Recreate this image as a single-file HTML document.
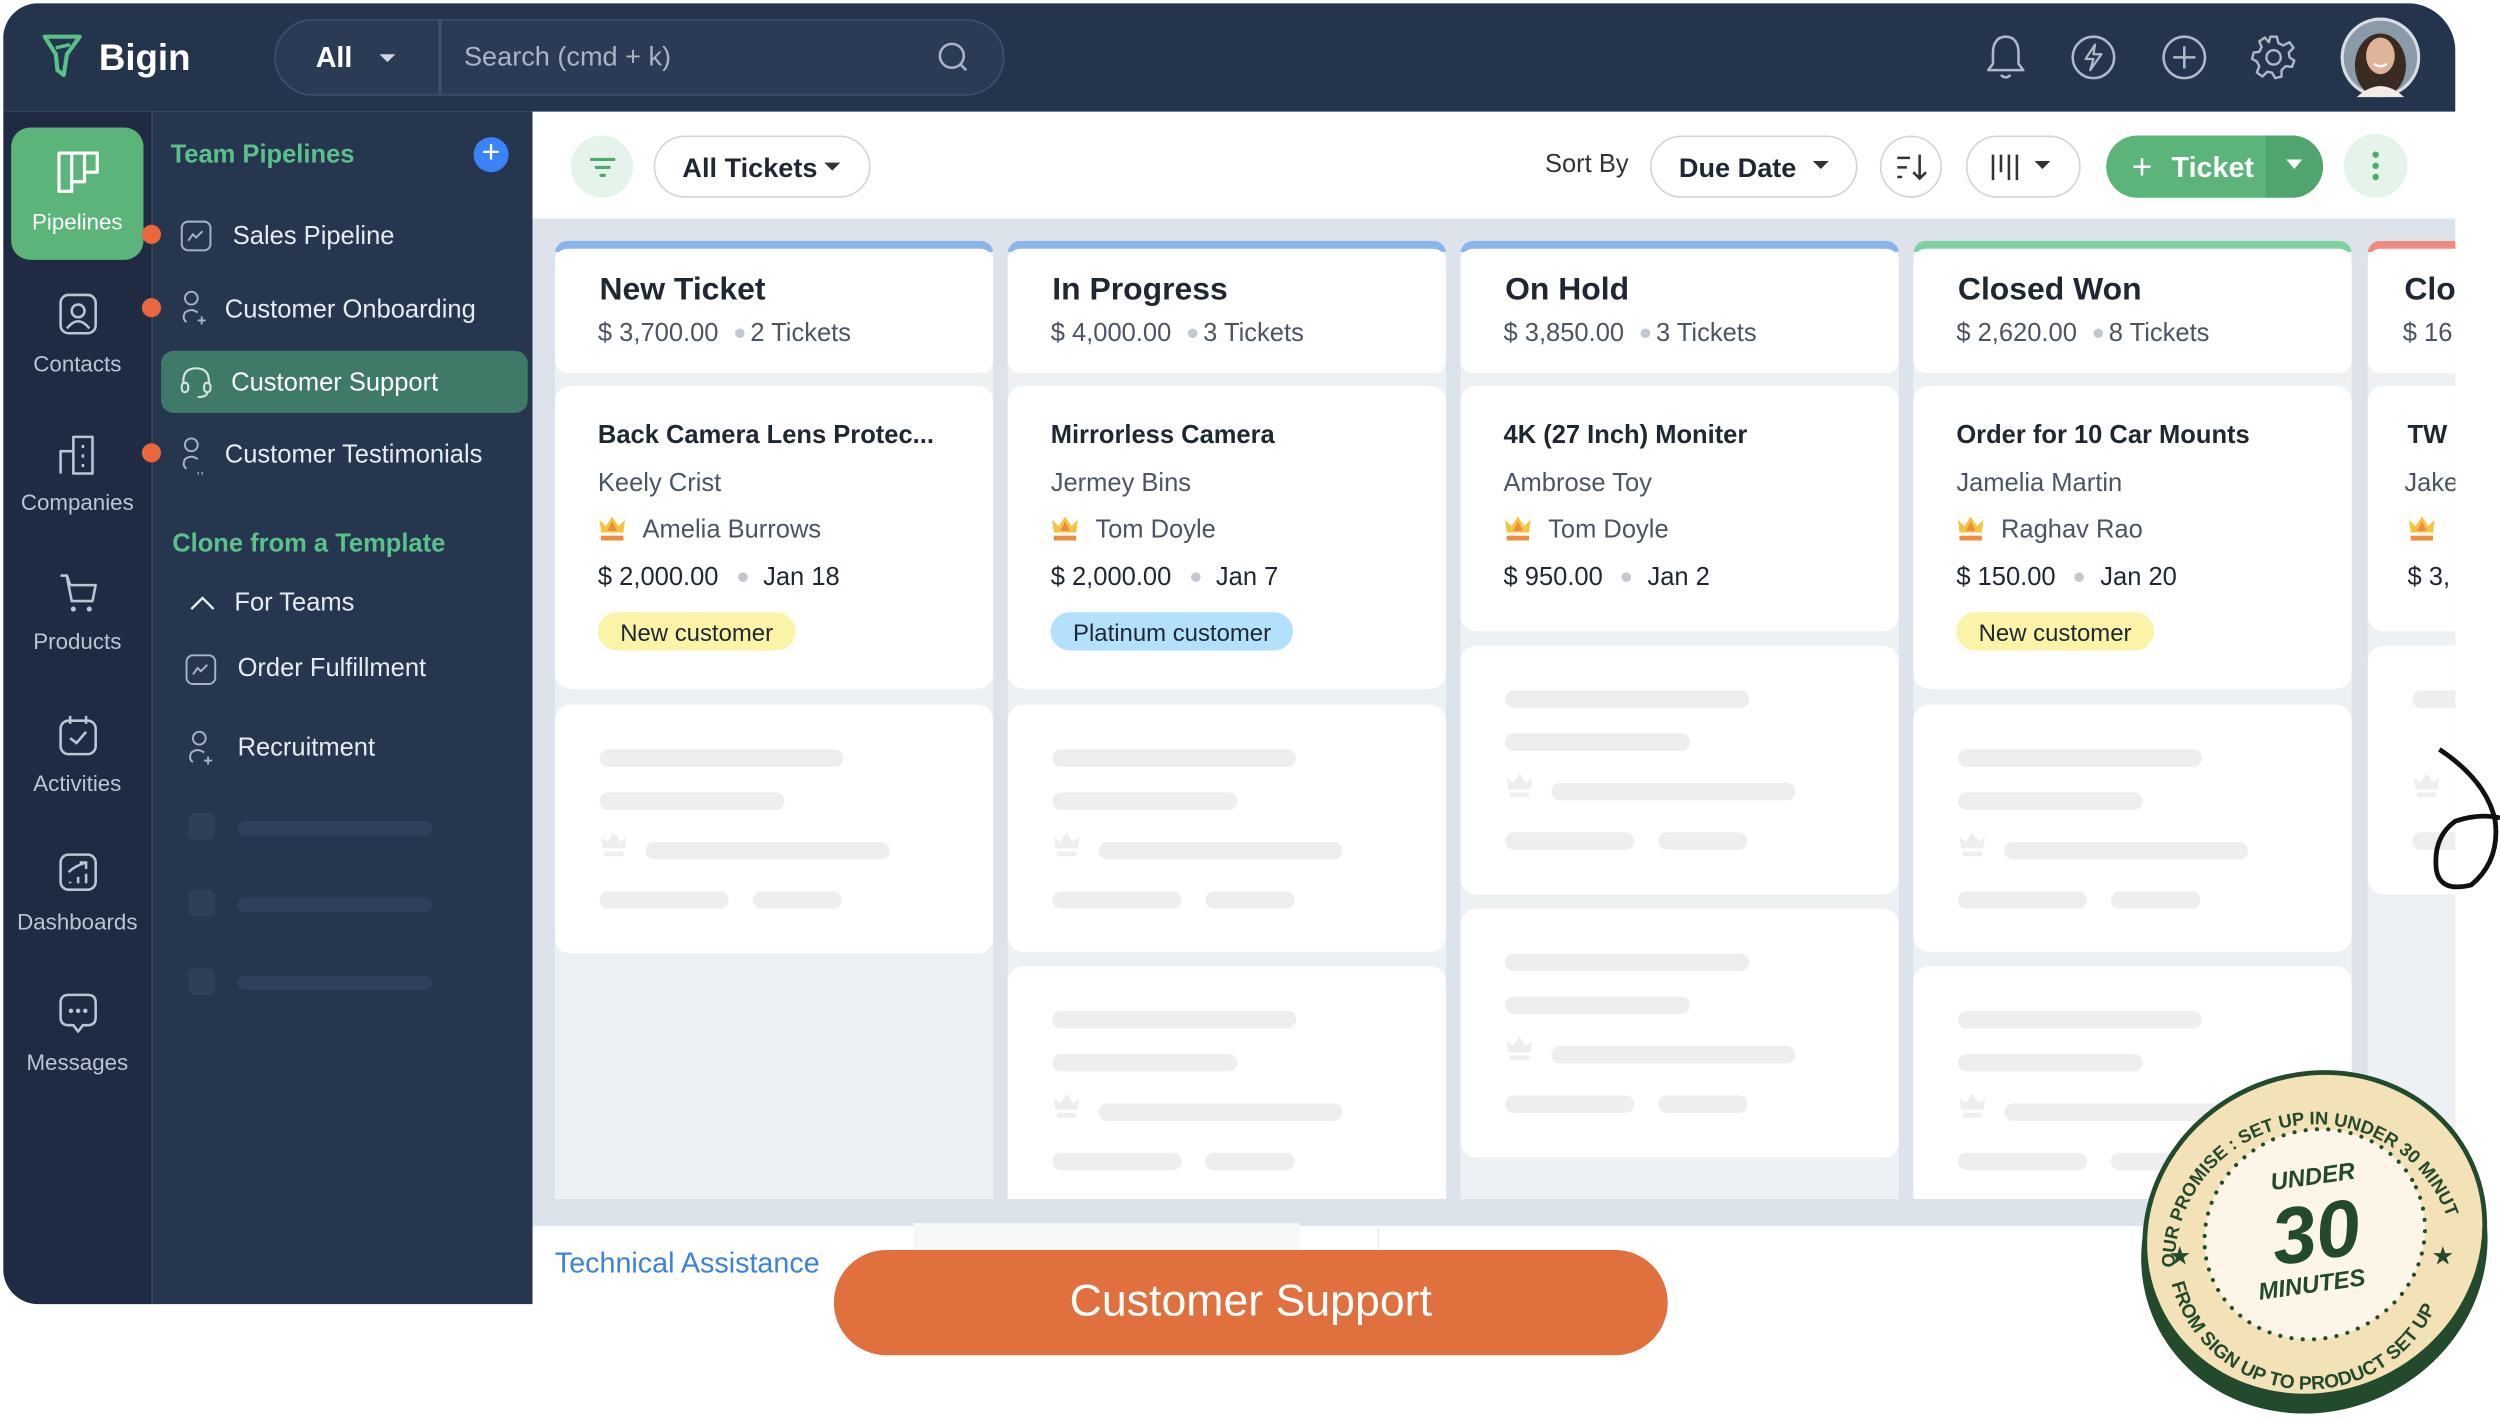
<!DOCTYPE html>
<html><head><meta charset="utf-8">
<style>
*{box-sizing:border-box;margin:0;padding:0}
html,body{width:2500px;height:1419px;overflow:hidden;background:#fff}
#s{position:absolute;left:0;top:0;width:1568px;height:890px;transform:scale(1.59439);transform-origin:0 0;font-family:"Liberation Sans",sans-serif}
.a{position:absolute}
.t{position:absolute;white-space:nowrap;line-height:1}
.col{position:absolute;top:151px;width:275px;height:601px;background:#eef1f4;border-radius:8px 8px 0 0;overflow:hidden}
.strip{position:absolute;left:0;top:0;right:0;height:7px}
.hd{position:absolute;left:0;top:5px;right:0;height:78px;background:#fff;border-radius:8px}
.card{position:absolute;left:0;right:0;background:#fff;border-radius:10px}
.bar{position:absolute;height:11px;border-radius:6px;background:#eeeeee}
.ti{font-size:20px;font-weight:bold;color:#1f2733;left:28px;top:21px}
.sub{font-size:16px;color:#4b5563;left:27px;top:51px}
.dot{display:inline-block;width:6px;height:6px;border-radius:3px;background:#c3c8cf;margin:0 4px 2px 10px;vertical-align:middle}
.ct{font-size:16px;font-weight:bold;color:#1f2733;left:27px}
.cn{font-size:16px;color:#4b5563;left:27px}
.tag{position:absolute;left:27px;height:24px;border-radius:12px;font-size:15px;color:#1f2733;padding:5px 14px 0}
.nav{position:absolute;left:2px;width:93px;text-align:center;font-size:14px;color:#bcc5d3}
.pi{position:absolute;font-size:16px;color:#e6ebf2;white-space:nowrap;line-height:1}
.od{position:absolute;left:89px;width:12px;height:12px;border-radius:6px;background:#e8673c}
</style></head><body><div id="s">

<div class="a" style="left:2px;top:2px;width:1538px;height:816px;background:#fff;border-radius:22px 30px 0 22px;overflow:hidden">
  <div class="a" style="left:0;top:0;width:1538px;height:68px;background:#24344d"></div>
  <div class="a" style="left:0;top:68px;width:93px;height:748px;background:#1e2b42"></div>
  <div class="a" style="left:93px;top:68px;width:239px;height:748px;background:#26364f;border-left:1px solid #34445c"></div>
  <div class="a" style="left:332px;top:135px;width:1206px;height:632px;background:#dce3ea"></div>
</div>

<svg class="a" style="left:25px;top:20px" width="28" height="30" viewBox="0 0 28 30"><path d="M3 3 L25 3 L17 14 L15 27 L11 24 L10 14 Z" fill="none" stroke="#5bc08a" stroke-width="2.6" stroke-linejoin="round"/><path d="M10 10 L19 8" stroke="#5bc08a" stroke-width="2.2"/></svg>
<div class="t" style="left:62px;top:25px;font-size:23px;font-weight:bold;color:#fff">Bigin</div>

<div class="a" style="left:172px;top:12px;width:458px;height:48px;border:1.5px solid #3e5070;border-radius:24px;background:#2b3b55"></div>
<div class="a" style="left:275px;top:13px;width:1.5px;height:46px;background:#3e5070"></div>
<div class="t" style="left:198px;top:27px;font-size:18px;font-weight:bold;color:#fff">All</div>
<div class="a" style="left:238px;top:34px;border:5px solid transparent;border-top:5px solid #cfd6e0"></div>
<div class="t" style="left:291px;top:27px;font-size:17px;color:#aab4c4">Search (cmd + k)</div>
<svg class="a" style="left:587px;top:25px" width="22" height="22" viewBox="0 0 22 22"><circle cx="10" cy="10" r="7.5" fill="none" stroke="#aab4c4" stroke-width="1.6"/><path d="M15.5 15.5 L19 19" stroke="#aab4c4" stroke-width="1.6"/></svg>

<svg class="a" style="left:1244px;top:20px" width="28" height="32" viewBox="0 0 28 32"><path d="M14 3 C8 3 6 8 6 13 L6 20 L3 24 L25 24 L22 20 L22 13 C22 8 20 3 14 3 Z" fill="none" stroke="#aeb8c8" stroke-width="1.6" stroke-linejoin="round"/><path d="M11 27 Q14 30 17 27" fill="none" stroke="#aeb8c8" stroke-width="1.6"/></svg>
<svg class="a" style="left:1298px;top:21px" width="30" height="30" viewBox="0 0 30 30"><circle cx="15" cy="15" r="13" fill="none" stroke="#aeb8c8" stroke-width="1.6"/><path d="M16 7 L10 16 L15 16 L13 23 L20 13 L15 13 Z" fill="none" stroke="#aeb8c8" stroke-width="1.4" stroke-linejoin="round"/></svg>
<svg class="a" style="left:1355px;top:21px" width="30" height="30" viewBox="0 0 30 30"><circle cx="15" cy="15" r="13" fill="none" stroke="#aeb8c8" stroke-width="1.6"/><path d="M15 8 V22 M8 15 H22" stroke="#aeb8c8" stroke-width="1.6"/></svg>
<svg class="a" style="left:1411px;top:21px" width="30" height="30" viewBox="0 0 30 30"><path d="M13 2 H17 L18 6 L21 7.5 L25 5.5 L27.5 9 L24.5 12 L25 15 L28 17 L26.5 21 L22.5 20.5 L20 23 L20 27 L16 28 L14 24.5 L11 24 L8 27 L4.5 24.5 L6 20.5 L4.5 17.5 L1.5 16 L2.5 12 L6 11.5 L7.5 8.5 L6 5 L9.5 2.5 L12 5.5 Z" fill="none" stroke="#aeb8c8" stroke-width="1.5" stroke-linejoin="round"/><circle cx="15" cy="15" r="4.5" fill="none" stroke="#aeb8c8" stroke-width="1.5"/></svg>
<svg class="a" style="left:1468px;top:11px" width="50" height="50" viewBox="0 0 50 50"><circle cx="25" cy="25" r="24" fill="#8a9aa8" stroke="#d8dde3" stroke-width="2"/><ellipse cx="25" cy="30" rx="16" ry="20" fill="#3a2a22"/><ellipse cx="25" cy="24" rx="9" ry="11.5" fill="#e0b49a"/><path d="M10 50 Q25 36 40 50 Z" fill="#f2ece6"/><path d="M21 29 Q25 32 29 29" stroke="#fff" stroke-width="1.5" fill="none"/></svg>

<div class="a" style="left:7px;top:80px;width:83px;height:83px;background:#5bb57a;border-radius:12px"></div>
<svg class="a" style="left:35px;top:94px" width="28" height="28" viewBox="0 0 28 28"><path d="M2 2 H26 V14 H18 V20 H10 V26 H2 Z M10 2 V26 M18 2 V14" fill="none" stroke="#fff" stroke-width="2" stroke-linejoin="round"/></svg>
<div class="nav" style="top:131px;color:#fff">Pipelines</div>

<svg class="a" style="left:35px;top:183px" width="28" height="28" viewBox="0 0 28 28"><rect x="3" y="2" width="22" height="24" rx="5" fill="none" stroke="#bcc5d3" stroke-width="1.6"/><circle cx="14" cy="12" r="4" fill="none" stroke="#bcc5d3" stroke-width="1.6"/><path d="M7 23 Q14 14 21 23" fill="none" stroke="#bcc5d3" stroke-width="1.6"/></svg>
<div class="nav" style="top:220px">Contacts</div>
<svg class="a" style="left:35px;top:271px" width="28" height="28" viewBox="0 0 28 28"><path d="M3 26 V12 H11 V26 M11 26 V3 H23 V26 Z" fill="none" stroke="#bcc5d3" stroke-width="1.6" stroke-linejoin="round"/><path d="M17 8 V10 M17 14 V16 M17 20 V22" stroke="#bcc5d3" stroke-width="1.6"/></svg>
<div class="nav" style="top:307px">Companies</div>
<svg class="a" style="left:35px;top:358px" width="28" height="28" viewBox="0 0 28 28"><path d="M3 3 H7 L9 9 H25 L23 19 H10 L7 4" fill="none" stroke="#bcc5d3" stroke-width="1.6" stroke-linejoin="round"/><circle cx="11" cy="24" r="1.6" fill="#bcc5d3"/><circle cx="21" cy="24" r="1.6" fill="#bcc5d3"/></svg>
<div class="nav" style="top:394px">Products</div>
<svg class="a" style="left:35px;top:447px" width="28" height="28" viewBox="0 0 28 28"><rect x="3" y="5" width="22" height="21" rx="5" fill="none" stroke="#bcc5d3" stroke-width="1.6"/><path d="M9 2 V7 M19 2 V7 M9 16 L13 19 L19 12" fill="none" stroke="#bcc5d3" stroke-width="1.6"/></svg>
<div class="nav" style="top:483px">Activities</div>
<svg class="a" style="left:35px;top:533px" width="28" height="28" viewBox="0 0 28 28"><rect x="3" y="3" width="22" height="22" rx="5" fill="none" stroke="#bcc5d3" stroke-width="1.6"/><path d="M8 14 Q12 10 19 8 M15 8 H19 V12 M9 20 V21 M14 17 V21 M19 15 V21" fill="none" stroke="#bcc5d3" stroke-width="1.6"/></svg>
<div class="nav" style="top:570px">Dashboards</div>
<svg class="a" style="left:35px;top:621px" width="28" height="30" viewBox="0 0 28 30"><path d="M8 3 H20 Q25 3 25 8 V17 Q25 22 20 22 H17 L14 26 L11 22 H8 Q3 22 3 17 V8 Q3 3 8 3 Z" fill="none" stroke="#bcc5d3" stroke-width="1.6" stroke-linejoin="round"/><circle cx="9.5" cy="13" r="1.4" fill="#bcc5d3"/><circle cx="14" cy="13" r="1.4" fill="#bcc5d3"/><circle cx="18.5" cy="13" r="1.4" fill="#bcc5d3"/></svg>
<div class="nav" style="top:658px">Messages</div>

<div class="t" style="left:107px;top:90px;font-size:16px;font-weight:bold;color:#5cc08c">Team Pipelines</div>
<div class="a" style="left:297px;top:86px;width:22px;height:22px;border-radius:11px;background:#3b82f6;color:#fff;font-size:20px;line-height:21px;text-align:center">+</div>

<div class="od" style="top:141px"></div>
<svg class="a" style="left:113px;top:138px" width="20" height="20" viewBox="0 0 20 20"><rect x="1" y="1" width="18" height="18" rx="4" fill="none" stroke="#a9b4c4" stroke-width="1.2"/><path d="M5 13 L8 9 L10 11 L14 7" fill="none" stroke="#a9b4c4" stroke-width="1.2"/></svg>
<div class="pi" style="left:146px;top:141px">Sales Pipeline</div>

<div class="od" style="top:187px"></div>
<svg class="a" style="left:112px;top:182px" width="20" height="24" viewBox="0 0 20 24"><circle cx="8" cy="5" r="4" fill="none" stroke="#a9b4c4" stroke-width="1.2"/><path d="M12 14 Q8 11 4 14 Q2 18 5 20 M12 19 H17 M14.5 16.5 V21.5" fill="none" stroke="#a9b4c4" stroke-width="1.2"/></svg>
<div class="pi" style="left:141px;top:187px">Customer Onboarding</div>

<div class="a" style="left:101px;top:220px;width:230px;height:39px;border-radius:8px;background:#3e7a67"></div>
<svg class="a" style="left:112px;top:229px" width="22" height="22" viewBox="0 0 22 22"><path d="M3 12 V10 Q3 2 11 2 Q19 2 19 10 V12" fill="none" stroke="#d6e4de" stroke-width="1.3"/><rect x="2" y="11" width="4" height="6" rx="2" fill="none" stroke="#d6e4de" stroke-width="1.3"/><rect x="16" y="11" width="4" height="6" rx="2" fill="none" stroke="#d6e4de" stroke-width="1.3"/><path d="M18 17 Q18 20 12 20" fill="none" stroke="#d6e4de" stroke-width="1.3"/></svg>
<div class="pi" style="left:145px;top:233px;color:#fff">Customer Support</div>

<div class="od" style="top:278px"></div>
<svg class="a" style="left:112px;top:274px" width="20" height="24" viewBox="0 0 20 24"><circle cx="8" cy="5" r="4" fill="none" stroke="#a9b4c4" stroke-width="1.2"/><path d="M12 14 Q8 11 4 14 Q2 18 5 20" fill="none" stroke="#a9b4c4" stroke-width="1.2"/><text x="11" y="23" font-size="9" fill="#a9b4c4" font-family="Liberation Sans">,,</text></svg>
<div class="pi" style="left:141px;top:278px">Customer Testimonials</div>

<div class="t" style="left:108px;top:334px;font-size:16px;font-weight:bold;color:#5cc08c">Clone from a Template</div>
<svg class="a" style="left:118px;top:372px" width="18" height="12" viewBox="0 0 18 12"><path d="M2 10 L9 3 L16 10" fill="none" stroke="#e6ebf2" stroke-width="1.5"/></svg>
<div class="pi" style="left:147px;top:371px">For Teams</div>
<svg class="a" style="left:116px;top:410px" width="20" height="20" viewBox="0 0 20 20"><rect x="1" y="1" width="18" height="18" rx="4" fill="none" stroke="#a9b4c4" stroke-width="1.2"/><path d="M5 13 L8 9 L10 11 L14 7" fill="none" stroke="#a9b4c4" stroke-width="1.2"/></svg>
<div class="pi" style="left:149px;top:412px">Order Fulfillment</div>
<svg class="a" style="left:116px;top:457px" width="20" height="26" viewBox="0 0 20 26"><circle cx="9" cy="6" r="4" fill="none" stroke="#a9b4c4" stroke-width="1.2"/><path d="M12 15 Q8 12 4 15 Q2 19 5 21 M12 20 H17 M14.5 17.5 V22.5" fill="none" stroke="#a9b4c4" stroke-width="1.2"/></svg>
<div class="pi" style="left:149px;top:462px">Recruitment</div>

<div class="a" style="left:118px;top:510px;width:17px;height:17px;border-radius:4px;background:#2f3f58"></div>
<div class="a" style="left:149px;top:515px;width:122px;height:9px;border-radius:5px;background:#30405a"></div>
<div class="a" style="left:118px;top:558px;width:17px;height:17px;border-radius:4px;background:#2f3f58"></div>
<div class="a" style="left:149px;top:563px;width:122px;height:9px;border-radius:5px;background:#30405a"></div>
<div class="a" style="left:118px;top:607px;width:17px;height:17px;border-radius:4px;background:#2f3f58"></div>
<div class="a" style="left:149px;top:612px;width:122px;height:9px;border-radius:5px;background:#30405a"></div>

<div class="a" style="left:358px;top:85px;width:39px;height:39px;border-radius:20px;background:#e5f3ea"></div>
<svg class="a" style="left:368px;top:95px" width="20" height="20" viewBox="0 0 20 20"><path d="M3 5 H17 M6 10 H14 M9 15 H11" stroke="#4caa6e" stroke-width="2" stroke-linecap="round"/></svg>
<div class="a" style="left:410px;top:85px;width:136px;height:39px;border:1.5px solid #cfd5dd;border-radius:20px"></div>
<div class="t" style="left:428px;top:97px;font-size:17px;font-weight:bold;color:#1f2733">All Tickets</div>
<div class="a" style="left:517px;top:102px;border:5px solid transparent;border-top:5px solid #333"></div>
<div class="t" style="left:969px;top:96px;font-size:16px;color:#333">Sort By</div>
<div class="a" style="left:1035px;top:85px;width:130px;height:39px;border:1.5px solid #cfd5dd;border-radius:20px"></div>
<div class="t" style="left:1053px;top:97px;font-size:17px;font-weight:bold;color:#1f2733">Due Date</div>
<div class="a" style="left:1137px;top:101px;border:5px solid transparent;border-top:5px solid #333"></div>
<div class="a" style="left:1179px;top:85px;width:39px;height:39px;border:1.5px solid #cfd5dd;border-radius:20px"></div>
<svg class="a" style="left:1187px;top:94px" width="24" height="22" viewBox="0 0 24 22"><path d="M3 5 H11 M3 11 H9 M3 17 H6 M17 3 V18 M13 14 L17 18 L21 14" fill="none" stroke="#333" stroke-width="1.6"/></svg>
<div class="a" style="left:1233px;top:85px;width:72px;height:39px;border:1.5px solid #cfd5dd;border-radius:20px"></div>
<svg class="a" style="left:1247px;top:94px" width="22" height="22" viewBox="0 0 22 22"><path d="M3 3 V19 M8 3 V14 M13 3 V19 M18 3 V19" stroke="#333" stroke-width="1.6"/></svg>
<div class="a" style="left:1276px;top:101px;border:5px solid transparent;border-top:5px solid #333"></div>
<div class="a" style="left:1321px;top:85px;width:136px;height:39px;border-radius:20px;background:#5bb57a;overflow:hidden"><div class="a" style="left:100px;top:0;width:36px;height:39px;background:#50a56e"></div></div>
<div class="t" style="left:1337px;top:94px;font-size:22px;color:#fff">+</div>
<div class="t" style="left:1362px;top:96px;font-size:18px;font-weight:bold;color:#fff">Ticket</div>
<div class="a" style="left:1434px;top:100px;border:5px solid transparent;border-top:6px solid #fff"></div>
<div class="a" style="left:1470px;top:84px;width:40px;height:40px;border-radius:20px;background:#e5f3ea"></div>
<div class="a" style="left:1488px;top:95px;width:4px;height:4px;border-radius:2px;background:#4caa6e;box-shadow:0 7px 0 #4caa6e,0 14px 0 #4caa6e"></div>

<div class="col" style="left:348px">
  <div class="strip" style="background:#8ab4ec"></div><div class="hd"></div>
  <div class="t ti">New Ticket</div>
  <div class="t sub">$ 3,700.00<span class="dot"></span>2 Tickets</div>
  <div class="card" style="top:91px;height:190px">
    <div class="t ct" style="top:24px">Back Camera Lens Protec...</div>
    <div class="t cn" style="top:54px">Keely Crist</div>
    <svg class="a" style="left:27px;top:81px" width="18" height="17" viewBox="0 0 18 17"><path d="M1 3 L5 7 L9 1 L13 7 L17 3 L16 11 H2 Z" fill="#f5c342"/><path d="M9 4 L12 10 H6 Z" fill="#ef8b3a"/><rect x="2" y="13" width="14" height="3" fill="#ef8b3a"/></svg>
    <div class="t cn" style="left:55px;top:83px">Amelia Burrows</div>
    <div class="t cn" style="top:113px;color:#1f2733">$ 2,000.00<span class="dot" style="margin:0 10px 2px 12px"></span>Jan 18</div>
    <div class="tag" style="top:142px;background:#fbf3a8">New customer</div>
  </div>
  <div class="card" style="top:291px;height:156px">
    <div class="bar" style="left:28px;top:28px;width:153px"></div><div class="bar" style="left:28px;top:55px;width:116px"></div>
    <svg class="a" style="left:28px;top:80px" width="18" height="16" viewBox="0 0 18 16"><path d="M1 3 L5 6 L9 0 L13 6 L17 3 L16 10 H2 Z" fill="#eee"/><rect x="3" y="12" width="12" height="3" fill="#eee"/></svg>
    <div class="bar" style="left:57px;top:86px;width:153px"></div>
    <div class="bar" style="left:28px;top:117px;width:81px"></div><div class="bar" style="left:124px;top:117px;width:56px"></div>
  </div>
</div>

<div class="col" style="left:632px">
  <div class="strip" style="background:#8ab4ec"></div><div class="hd"></div>
  <div class="t ti">In Progress</div>
  <div class="t sub">$ 4,000.00<span class="dot"></span>3 Tickets</div>
  <div class="card" style="top:91px;height:190px">
    <div class="t ct" style="top:24px">Mirrorless Camera</div>
    <div class="t cn" style="top:54px">Jermey Bins</div>
    <svg class="a" style="left:27px;top:81px" width="18" height="17" viewBox="0 0 18 17"><path d="M1 3 L5 7 L9 1 L13 7 L17 3 L16 11 H2 Z" fill="#f5c342"/><path d="M9 4 L12 10 H6 Z" fill="#ef8b3a"/><rect x="2" y="13" width="14" height="3" fill="#ef8b3a"/></svg>
    <div class="t cn" style="left:55px;top:83px">Tom Doyle</div>
    <div class="t cn" style="top:113px;color:#1f2733">$ 2,000.00<span class="dot" style="margin:0 10px 2px 12px"></span>Jan 7</div>
    <div class="tag" style="top:142px;background:#b3e0fb">Platinum customer</div>
  </div>
  <div class="card" style="top:291px;height:155px">
    <div class="bar" style="left:28px;top:28px;width:153px"></div><div class="bar" style="left:28px;top:55px;width:116px"></div>
    <svg class="a" style="left:28px;top:80px" width="18" height="16" viewBox="0 0 18 16"><path d="M1 3 L5 6 L9 0 L13 6 L17 3 L16 10 H2 Z" fill="#eee"/><rect x="3" y="12" width="12" height="3" fill="#eee"/></svg>
    <div class="bar" style="left:57px;top:86px;width:153px"></div>
    <div class="bar" style="left:28px;top:117px;width:81px"></div><div class="bar" style="left:124px;top:117px;width:56px"></div>
  </div>
  <div class="card" style="top:455px;height:160px">
    <div class="bar" style="left:28px;top:28px;width:153px"></div><div class="bar" style="left:28px;top:55px;width:116px"></div>
    <svg class="a" style="left:28px;top:80px" width="18" height="16" viewBox="0 0 18 16"><path d="M1 3 L5 6 L9 0 L13 6 L17 3 L16 10 H2 Z" fill="#eee"/><rect x="3" y="12" width="12" height="3" fill="#eee"/></svg>
    <div class="bar" style="left:57px;top:86px;width:153px"></div>
    <div class="bar" style="left:28px;top:117px;width:81px"></div><div class="bar" style="left:124px;top:117px;width:56px"></div>
  </div>
</div>

<div class="col" style="left:916px">
  <div class="strip" style="background:#8ab4ec"></div><div class="hd"></div>
  <div class="t ti">On Hold</div>
  <div class="t sub">$ 3,850.00<span class="dot"></span>3 Tickets</div>
  <div class="card" style="top:91px;height:154px">
    <div class="t ct" style="top:24px">4K (27 Inch) Moniter</div>
    <div class="t cn" style="top:54px">Ambrose Toy</div>
    <svg class="a" style="left:27px;top:81px" width="18" height="17" viewBox="0 0 18 17"><path d="M1 3 L5 7 L9 1 L13 7 L17 3 L16 11 H2 Z" fill="#f5c342"/><path d="M9 4 L12 10 H6 Z" fill="#ef8b3a"/><rect x="2" y="13" width="14" height="3" fill="#ef8b3a"/></svg>
    <div class="t cn" style="left:55px;top:83px">Tom Doyle</div>
    <div class="t cn" style="top:113px;color:#1f2733">$ 950.00<span class="dot" style="margin:0 10px 2px 12px"></span>Jan 2</div>
  </div>
  <div class="card" style="top:254px;height:156px">
    <div class="bar" style="left:28px;top:28px;width:153px"></div><div class="bar" style="left:28px;top:55px;width:116px"></div>
    <svg class="a" style="left:28px;top:80px" width="18" height="16" viewBox="0 0 18 16"><path d="M1 3 L5 6 L9 0 L13 6 L17 3 L16 10 H2 Z" fill="#eee"/><rect x="3" y="12" width="12" height="3" fill="#eee"/></svg>
    <div class="bar" style="left:57px;top:86px;width:153px"></div>
    <div class="bar" style="left:28px;top:117px;width:81px"></div><div class="bar" style="left:124px;top:117px;width:56px"></div>
  </div>
  <div class="card" style="top:419px;height:156px">
    <div class="bar" style="left:28px;top:28px;width:153px"></div><div class="bar" style="left:28px;top:55px;width:116px"></div>
    <svg class="a" style="left:28px;top:80px" width="18" height="16" viewBox="0 0 18 16"><path d="M1 3 L5 6 L9 0 L13 6 L17 3 L16 10 H2 Z" fill="#eee"/><rect x="3" y="12" width="12" height="3" fill="#eee"/></svg>
    <div class="bar" style="left:57px;top:86px;width:153px"></div>
    <div class="bar" style="left:28px;top:117px;width:81px"></div><div class="bar" style="left:124px;top:117px;width:56px"></div>
  </div>
</div>

<div class="col" style="left:1200px">
  <div class="strip" style="background:#7dd3a0"></div><div class="hd"></div>
  <div class="t ti">Closed Won</div>
  <div class="t sub">$ 2,620.00<span class="dot"></span>8 Tickets</div>
  <div class="card" style="top:91px;height:190px">
    <div class="t ct" style="top:24px">Order for 10 Car Mounts</div>
    <div class="t cn" style="top:54px">Jamelia Martin</div>
    <svg class="a" style="left:27px;top:81px" width="18" height="17" viewBox="0 0 18 17"><path d="M1 3 L5 7 L9 1 L13 7 L17 3 L16 11 H2 Z" fill="#f5c342"/><path d="M9 4 L12 10 H6 Z" fill="#ef8b3a"/><rect x="2" y="13" width="14" height="3" fill="#ef8b3a"/></svg>
    <div class="t cn" style="left:55px;top:83px">Raghav Rao</div>
    <div class="t cn" style="top:113px;color:#1f2733">$ 150.00<span class="dot" style="margin:0 10px 2px 12px"></span>Jan 20</div>
    <div class="tag" style="top:142px;background:#fbf3a8">New customer</div>
  </div>
  <div class="card" style="top:291px;height:155px">
    <div class="bar" style="left:28px;top:28px;width:153px"></div><div class="bar" style="left:28px;top:55px;width:116px"></div>
    <svg class="a" style="left:28px;top:80px" width="18" height="16" viewBox="0 0 18 16"><path d="M1 3 L5 6 L9 0 L13 6 L17 3 L16 10 H2 Z" fill="#eee"/><rect x="3" y="12" width="12" height="3" fill="#eee"/></svg>
    <div class="bar" style="left:57px;top:86px;width:153px"></div>
    <div class="bar" style="left:28px;top:117px;width:81px"></div><div class="bar" style="left:124px;top:117px;width:56px"></div>
  </div>
  <div class="card" style="top:455px;height:160px">
    <div class="bar" style="left:28px;top:28px;width:153px"></div><div class="bar" style="left:28px;top:55px;width:116px"></div>
    <svg class="a" style="left:28px;top:80px" width="18" height="16" viewBox="0 0 18 16"><path d="M1 3 L5 6 L9 0 L13 6 L17 3 L16 10 H2 Z" fill="#eee"/><rect x="3" y="12" width="12" height="3" fill="#eee"/></svg>
    <div class="bar" style="left:57px;top:86px;width:153px"></div>
    <div class="bar" style="left:28px;top:117px;width:81px"></div><div class="bar" style="left:124px;top:117px;width:56px"></div>
  </div>
</div>

<div class="a" style="left:1485px;top:151px;width:55px;height:601px;overflow:hidden">
<div class="col" style="left:0;top:0">
  <div class="strip" style="background:#f08a80"></div><div class="hd"></div>
  <div class="t ti" style="left:23px">Closed Lost</div>
  <div class="t sub" style="left:22px">$ 16</div>
  <div class="card" style="top:91px;height:154px">
    <div class="t ct" style="top:24px;left:25px">TW</div>
    <div class="t cn" style="top:54px;left:23px">Jake</div>
    <svg class="a" style="left:25px;top:81px" width="18" height="17" viewBox="0 0 18 17"><path d="M1 3 L5 7 L9 1 L13 7 L17 3 L16 11 H2 Z" fill="#f5c342"/><path d="M9 4 L12 10 H6 Z" fill="#ef8b3a"/><rect x="2" y="13" width="14" height="3" fill="#ef8b3a"/></svg>
    <div class="t cn" style="top:113px;left:25px;color:#1f2733">$ 3,</div>
  </div>
  <div class="card" style="top:254px;height:156px">
    <div class="bar" style="left:28px;top:28px;width:153px"></div>
    <svg class="a" style="left:28px;top:80px" width="18" height="16" viewBox="0 0 18 16"><path d="M1 3 L5 6 L9 0 L13 6 L17 3 L16 10 H2 Z" fill="#eee"/><rect x="3" y="12" width="12" height="3" fill="#eee"/></svg>
    <div class="bar" style="left:28px;top:117px;width:81px"></div>
  </div>
</div>
</div>

<div class="a" style="left:573px;top:767px;width:242px;height:51px;background:#f5f7f9"></div>
<div class="a" style="left:864px;top:767px;width:1px;height:51px;background:#eceff2"></div>
<div class="t" style="left:348px;top:783px;font-size:18px;color:#3b82d8">Technical Assistance</div>

<div class="a" style="left:523px;top:784px;width:523px;height:66px;border-radius:33px;background:#e0703d"></div>
<div class="t" style="left:523px;top:802px;width:523px;text-align:center;font-size:28px;color:#fff">Customer Support</div>

<svg class="a" style="left:1520px;top:465px" width="48" height="100" viewBox="0 0 48 100"><path d="M10 5 Q40 25 45 50 Q48 75 30 90 Q10 95 8 80 Q6 60 20 50 Q35 45 48 48" fill="none" stroke="#111" stroke-width="3"/></svg>

<svg class="a" style="left:1330px;top:655px" width="238" height="235" viewBox="0 0 238 235">
  <defs>
    <path id="ta" d="M 34 140 A 88 88 0 0 1 206 112"/>
    <path id="tb" d="M 32 150 A 88 88 0 0 0 196 168"/>
  </defs>
  <g transform="rotate(-25 120 120)">
    <ellipse cx="118" cy="128" rx="110" ry="102" fill="#234a2c"/>
    <ellipse cx="122" cy="120" rx="108" ry="100" fill="#f3e1b8" stroke="#234a2c" stroke-width="3"/>
    <ellipse cx="122" cy="120" rx="70" ry="65" fill="#fcf5e8" stroke="#234a2c" stroke-width="2.5" stroke-dasharray="0.1 7" stroke-linecap="round"/>
  </g>
  <text font-family="Liberation Sans" font-weight="bold" font-size="11.5" fill="#234a2c"><textPath href="#ta">OUR PROMISE : SET UP IN UNDER 30 MINUTES</textPath></text>
  <text font-family="Liberation Sans" font-weight="bold" font-size="12" fill="#234a2c"><textPath href="#tb">FROM SIGN UP TO PRODUCT SET UP</textPath></text>
  <text x="30" y="138" font-size="16" fill="#234a2c">★</text>
  <text x="195" y="138" font-size="16" fill="#234a2c">★</text>
  <g transform="rotate(-8 122 115)">
  <text x="125" y="88" text-anchor="middle" font-family="Liberation Sans" font-weight="bold" font-style="italic" font-size="15" fill="#234a2c">UNDER</text>
  <text x="122" y="135" text-anchor="middle" font-family="Liberation Sans" font-weight="bold" font-style="italic" font-size="50" fill="#234a2c">30</text>
  <text x="115" y="155" text-anchor="middle" font-family="Liberation Sans" font-weight="bold" font-style="italic" font-size="15" fill="#234a2c">MINUTES</text>
  </g>
</svg>

</div></body></html>
